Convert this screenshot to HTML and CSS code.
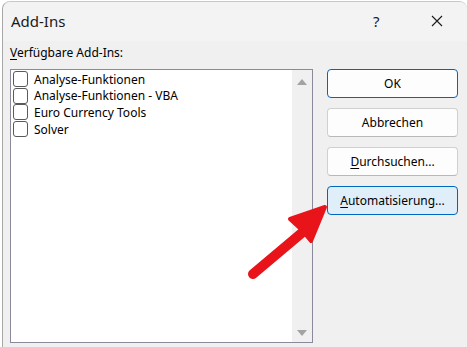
FILE: index.html
```html
<!DOCTYPE html>
<html lang="de">
<head>
<meta charset="utf-8">
<title>Add-Ins</title>
<link rel="stylesheet" href="styles.css">
</head>
<body>
<div class="window">
  <div class="titlebar">
    <span class="title">Add-Ins</span>
    <span class="help">?</span>
    <span class="close">
      <svg width="12" height="12" viewBox="0 0 12 12"><path d="M1 1 L11 11 M11 1 L1 11" stroke="#1a1a1a" stroke-width="1.1" fill="none"/></svg>
    </span>
  </div>
  <div class="content">
    <div class="left">
      <div class="label"><u>V</u>erfügbare Add-Ins:</div>
      <div class="listbox">
        <div class="items">
          <div class="item"><span class="check"></span>Analyse-Funktionen</div>
          <div class="item"><span class="check"></span>Analyse-Funktionen - VBA</div>
          <div class="item"><span class="check"></span>Euro Currency Tools</div>
          <div class="item"><span class="check"></span>Solver</div>
        </div>
        <div class="scrollbar">
          <span class="arrow-up"></span>
          <span class="arrow-down"></span>
        </div>
      </div>
    </div>
    <div class="buttons">
      <button class="btn primary">OK</button>
      <button class="btn">Abbrechen</button>
      <button class="btn"><u>D</u>urchsuchen...</button>
      <button class="btn hover"><u>A</u>utomatisierung...</button>
    </div>
  </div>
  <svg class="arrow" width="467" height="347" viewBox="0 0 467 347">
    <path d="M253 274 L310 226" stroke="#e8141a" stroke-width="10" stroke-linecap="round" fill="none"/>
    <path d="M325 207 L290 219 L302 230 L311 241 Z" fill="#e8141a" stroke="#e8141a" stroke-width="4" stroke-linejoin="round"/>
  </svg>
</div>
</body>
</html>
```
FILE: styles.css
```css
html, body {
  margin: 0;
  padding: 0;
  background: #ffffff;
}
body {
  width: 467px;
  height: 347px;
  overflow: hidden;
  font-family: "Noto Sans", "Open Sans", sans-serif;
  color: #000;
}
.window {
  position: relative;
  margin-left: 2px;
  margin-top: 1px;
  width: 465px;
  height: 346px;
  box-sizing: border-box;
  border-left: 1px solid #a8a8a8;
  border-top: 1px solid #c8c8c8;
  border-radius: 8px 8px 0 0;
  background: #f0f0f0;
  display: flex;
  flex-direction: column;
}
.titlebar {
  height: 39px;
  flex: none;
  display: flex;
  align-items: center;
  padding-left: 8px;
  background: #f3f3f3;
  border-radius: 8px 8px 0 0;
}
.title {
  font-size: 15px;
  font-weight: 400;
  color: #1a1a1a;
  flex: 1;
  margin-top: -2px;
}
.help {
  font-size: 15px;
  color: #1a1a1a;
  width: 10px;
  margin-right: 48px;
  margin-top: -2px;
}
.close {
  display: flex;
  margin-right: 24px;
  margin-top: -2px;
}
.content {
  flex: 1;
  display: flex;
  padding: 4px 8px 0 7px;
  gap: 14px;
}
.left {
  display: flex;
  flex-direction: column;
}
.label {
  font-size: 12px;
  line-height: 16px;
  height: 16px;
  color: #000;
  margin-bottom: 8px;
}
.label u, .btn u {
  text-decoration-thickness: 1px;
  text-underline-offset: 2px;
}
.listbox {
  width: 303px;
  height: 274px;
  box-sizing: border-box;
  border: 1px solid #8a8a9c;
  background: #ffffff;
  display: flex;
}
.items {
  flex: 1;
  padding-top: 1px;
}
.item {
  height: 16.6px;
  display: flex;
  align-items: center;
  font-size: 12px;
  color: #000;
}
.check {
  width: 13px;
  height: 14px;
  border: 1px solid #5a5a5a;
  border-radius: 3px;
  margin: 0 6px 0 2px;
  background: #fff;
  flex: none;
}
.scrollbar {
  width: 20px;
  background: #f0f0f0;
  display: flex;
  flex-direction: column;
  justify-content: space-between;
  align-items: center;
  padding: 9px 0 6px;
}
.arrow-up, .arrow-down {
  width: 0;
  height: 0;
  border-left: 5px solid transparent;
  border-right: 5px solid transparent;
}
.arrow-up {
  border-bottom: 6px solid #a3a3a3;
}
.arrow-down {
  border-top: 6px solid #a3a3a3;
}
.buttons {
  display: flex;
  flex-direction: column;
  gap: 10px;
  padding-top: 24px;
}
.btn {
  width: 131px;
  height: 29px;
  box-sizing: border-box;
  font-family: "Noto Sans", "Open Sans", sans-serif;
  font-size: 12px;
  color: #000;
  background: #fdfdfd;
  border: 1px solid #d0d0d0;
  border-bottom-color: #b8b8b8;
  border-radius: 4px;
  padding: 0;
  display: flex;
  align-items: center;
  justify-content: center;
}
.btn.primary {
  border: 1px solid #0067c0;
  background: #fdfdfd;
}
.btn.hover {
  background: #e0eef9;
  border: 1px solid #0067c0;
}
.arrow {
  position: absolute;
  left: -3px;
  top: -2px;
  pointer-events: none;
}
```
